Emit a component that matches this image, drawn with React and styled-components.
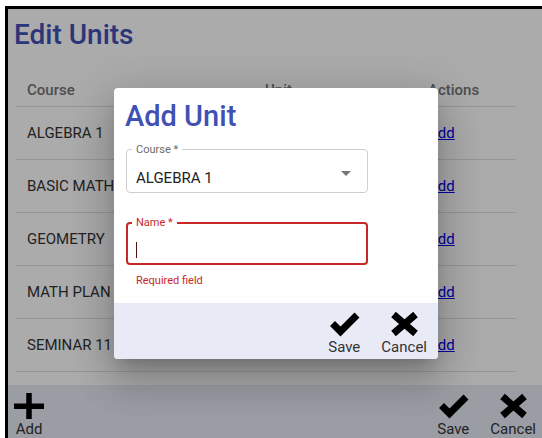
import React from "react";
import styled, { createGlobalStyle } from "styled-components";

const GlobalStyle = createGlobalStyle`
  html, body {
    margin: 0;
    padding: 0;
    overflow: hidden;
    background: #ffffff;
  }
  body {
    font-family: Roboto, "Noto Sans", "Liberation Sans", sans-serif;
  }
  * { box-sizing: border-box; }
`;

const INDIGO = "#3f51b5";
const ERROR = "#c62828";
const TINT = "#e8eaf6";

const Frame = styled.div`
  position: relative;
  margin: 6px 0 0 5px;
  width: 539px;
  height: 432px;
  border-top: 3px solid #000;
  border-left: 3px solid #000;
  background: #fff;
  overflow: hidden;
  display: flex;
  flex-direction: column;
`;

const PageTitle = styled.h1`
  margin: 9px 0 0 6px;
  font-size: 28px;
  line-height: 34px;
  font-weight: 500;
  color: ${INDIGO};
`;

const Table = styled.div`
  margin: 21px 0 0 8px;
  width: 500px;
  display: grid;
  grid-template-columns: 238px 163px 99px;
`;

const Cell = styled.div`
  height: ${(p) => (p.$head ? "34px" : "53px")};
  padding: 0 11px;
  display: flex;
  align-items: center;
  border-bottom: 1px solid #e0e0e0;
  font-size: 15px;
  font-weight: ${(p) => (p.$head ? 500 : 400)};
  color: ${(p) => (p.$head ? "#757575" : "#333")};
  white-space: nowrap;
`;

const RowLink = styled.a`
  color: #0000ee;
  text-decoration: underline;
  font-size: 15px;
  cursor: pointer;
`;

const ActionBar = styled.div`
  margin-top: 13px;
  flex: 1;
  background: ${TINT};
  display: flex;
  justify-content: space-between;
  align-items: flex-start;
  padding: 8px 8px 0 6px;
`;

const ButtonGroup = styled.div`
  display: flex;
  gap: 21px;
`;

const IconButton = styled.button`
  display: flex;
  flex-direction: column;
  align-items: center;
  padding: 0;
  border: 0;
  background: transparent;
  color: #000;
  cursor: pointer;
  font-family: inherit;
`;

const ButtonLabel = styled.span`
  margin-top: 2px;
  font-size: 15px;
  line-height: 17px;
  color: #333;
`;

const Backdrop = styled.div`
  position: absolute;
  inset: 0;
  background: rgba(0, 0, 0, 0.33);
  display: flex;
  align-items: center;
  justify-content: center;
`;

const Dialog = styled.div`
  width: 324px;
  background: #fff;
  border-radius: 4px;
  overflow: hidden;
  box-shadow: 0 11px 15px -7px rgba(0, 0, 0, 0.2),
    0 24px 38px 3px rgba(0, 0, 0, 0.14), 0 9px 46px 8px rgba(0, 0, 0, 0.12);
`;

const DialogTitle = styled.h2`
  margin: 11px 11px 0;
  font-size: 29px;
  line-height: 34px;
  font-weight: 500;
  color: ${INDIGO};
`;

const Form = styled.div`
  padding: 16px 12px 15px;
  display: flex;
  flex-direction: column;
`;

const Field = styled.div`
  position: relative;
  width: 242px;
  height: ${(p) => (p.$error ? "43px" : "44px")};
  margin-top: ${(p) => p.$gap || 0}px;
  border: ${(p) => (p.$error ? `2px solid ${ERROR}` : "1px solid #cfcfcf")};
  border-radius: 4px;
  padding-left: ${(p) => (p.$error ? 8 : 9)}px;
  padding-top: ${(p) => (p.$error ? 16 : 20)}px;
  display: flex;
  align-items: flex-start;
`;

const FieldLabel = styled.span`
  position: absolute;
  top: ${(p) => (p.$error ? -8 : -7)}px;
  left: ${(p) => (p.$error ? 4 : 5)}px;
  padding: 0 4px;
  background: #fff;
  font-size: 11px;
  line-height: 13px;
  color: ${(p) => (p.$error ? ERROR : "#6b6b6b")};
`;

const FieldValue = styled.span`
  font-size: 15px;
  line-height: 17px;
  color: #222;
`;

const Caret = styled.span`
  display: block;
  width: 1px;
  height: 16px;
  margin-top: 2px;
  background: #4a1515;
`;

const DropArrow = styled.span`
  margin: 1px 16px 0 auto;
  width: 0;
  height: 0;
  border-left: 5px solid transparent;
  border-right: 5px solid transparent;
  border-top: 5px solid #767676;
`;

const Helper = styled.div`
  margin-top: 9px;
  padding-left: 10px;
  font-size: 11px;
  line-height: 14px;
  color: ${ERROR};
`;

const DialogFooter = styled.div`
  background: ${TINT};
  display: flex;
  justify-content: flex-end;
  gap: 21px;
  padding: 8px 11px 3px;
`;

const CheckIcon = () => (
  <svg width="31" height="26" viewBox="0 0 31 26">
    <polyline
      points="3.5,12.5 11.5,20.5 28,4"
      fill="none"
      stroke="#000"
      strokeWidth="7"
      strokeLinejoin="miter"
    />
  </svg>
);

const CloseIcon = () => (
  <svg width="29" height="26" viewBox="0 0 29 26">
    <path
      d="M3.5 3.5 L25.5 22.5 M25.5 3.5 L3.5 22.5"
      stroke="#000"
      strokeWidth="7"
      fill="none"
    />
  </svg>
);

const PlusIcon = () => (
  <svg width="30" height="26" viewBox="0 0 30 26">
    <rect x="0" y="10.5" width="30" height="5.5" fill="#000" />
    <rect x="12.25" y="0" width="5.5" height="26" fill="#000" />
  </svg>
);

const ActionButton = ({ icon, label }) => (
  <IconButton type="button">
    {icon}
    <ButtonLabel>{label}</ButtonLabel>
  </IconButton>
);

const courses = ["ALGEBRA 1", "BASIC MATH", "GEOMETRY", "MATH PLAN", "SEMINAR 11"];

export default function App() {
  return (
    <>
      <GlobalStyle />
      <Frame>
        <PageTitle>Edit Units</PageTitle>
        <Table>
          <Cell $head>Course</Cell>
          <Cell $head>Unit</Cell>
          <Cell $head>Actions</Cell>
          {courses.map((c) => (
            <React.Fragment key={c}>
              <Cell>{c}</Cell>
              <Cell />
              <Cell>
                <RowLink>Add</RowLink>
              </Cell>
            </React.Fragment>
          ))}
        </Table>
        <ActionBar>
          <ActionButton icon={<PlusIcon />} label="Add" />
          <ButtonGroup>
            <ActionButton icon={<CheckIcon />} label="Save" />
            <ActionButton icon={<CloseIcon />} label="Cancel" />
          </ButtonGroup>
        </ActionBar>

        <Backdrop>
          <Dialog>
            <DialogTitle>Add Unit</DialogTitle>
            <Form>
              <Field>
                <FieldLabel>Course *</FieldLabel>
                <FieldValue>ALGEBRA 1</FieldValue>
                <DropArrow />
              </Field>
              <Field $error $gap={29}>
                <FieldLabel $error>Name *</FieldLabel>
                <Caret />
              </Field>
              <Helper>Required field</Helper>
            </Form>
            <DialogFooter>
              <ActionButton icon={<CheckIcon />} label="Save" />
              <ActionButton icon={<CloseIcon />} label="Cancel" />
            </DialogFooter>
          </Dialog>
        </Backdrop>
      </Frame>
    </>
  );
}
